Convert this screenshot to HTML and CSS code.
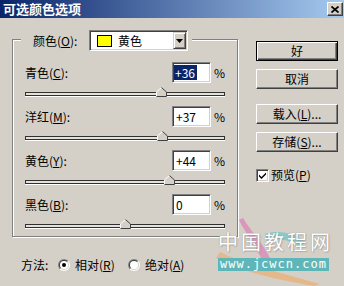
FILE: index.html
```html
<!DOCTYPE html>
<html lang="zh-CN">
<head>
<meta charset="utf-8">
<title>可选颜色选项</title>
<link rel="stylesheet" href="styles.css">
</head>
<body>
<div class="window">
  <div class="titlebar">
    <span class="title">可选颜色选项</span>
    <span class="close-btn"><svg width="8" height="7" viewBox="0 0 8 7"><path d="M0.5 0.5 L7.5 6.5 M7.5 0.5 L0.5 6.5" stroke="#000" stroke-width="1.7"/></svg></span>
  </div>
  <div class="body">
    <div class="left">
      <div class="group">
        <div class="legend">
          <span class="legend-label">颜色(<u>O</u>):</span>
          <div class="combo">
            <span class="swatch"></span>
            <span class="combo-text">黄色</span>
            <span class="combo-arrow"><svg width="7" height="4" viewBox="0 0 7 4"><path d="M0 0H7L3.5 4Z" fill="#000"/></svg></span>
          </div>
        </div>
        <div class="srow">
          <div class="sline">
            <span class="slabel">青色(<u>C</u>):</span>
            <span class="field"><span class="sel">+36</span></span>
            <span class="pct">%</span>
          </div>
          <div class="track"><svg class="thumb" style="left:130px" width="11" height="10" viewBox="0 0 11 10"><path d="M5.5 0.5 L10.5 5 V9.5 H0.5 V5 Z" fill="#D4D0C8"/><path d="M0.5 9 V5 L5.5 0.5" fill="none" stroke="#fff"/><path d="M5.5 0.5 L10.5 5 V9.5 H0.5" fill="none" stroke="#404040"/></svg></div>
        </div>
        <div class="srow">
          <div class="sline">
            <span class="slabel">洋红(<u>M</u>):</span>
            <span class="field">+37</span>
            <span class="pct">%</span>
          </div>
          <div class="track"><svg class="thumb" style="left:131px" width="11" height="10" viewBox="0 0 11 10"><path d="M5.5 0.5 L10.5 5 V9.5 H0.5 V5 Z" fill="#D4D0C8"/><path d="M0.5 9 V5 L5.5 0.5" fill="none" stroke="#fff"/><path d="M5.5 0.5 L10.5 5 V9.5 H0.5" fill="none" stroke="#404040"/></svg></div>
        </div>
        <div class="srow">
          <div class="sline">
            <span class="slabel">黄色(<u>Y</u>):</span>
            <span class="field">+44</span>
            <span class="pct">%</span>
          </div>
          <div class="track"><svg class="thumb" style="left:138px" width="11" height="10" viewBox="0 0 11 10"><path d="M5.5 0.5 L10.5 5 V9.5 H0.5 V5 Z" fill="#D4D0C8"/><path d="M0.5 9 V5 L5.5 0.5" fill="none" stroke="#fff"/><path d="M5.5 0.5 L10.5 5 V9.5 H0.5" fill="none" stroke="#404040"/></svg></div>
        </div>
        <div class="srow">
          <div class="sline">
            <span class="slabel">黑色(<u>B</u>):</span>
            <span class="field">0</span>
            <span class="pct">%</span>
          </div>
          <div class="track"><svg class="thumb" style="left:94px" width="11" height="10" viewBox="0 0 11 10"><path d="M5.5 0.5 L10.5 5 V9.5 H0.5 V5 Z" fill="#D4D0C8"/><path d="M0.5 9 V5 L5.5 0.5" fill="none" stroke="#fff"/><path d="M5.5 0.5 L10.5 5 V9.5 H0.5" fill="none" stroke="#404040"/></svg></div>
        </div>
      </div>
      <div class="method">
        <span class="mlabel">方法:</span>
        <svg class="radio" width="12" height="12" viewBox="0 0 12 12">
          <defs>
            <linearGradient id="ro" x1="0" y1="0" x2="1" y2="1"><stop offset="0.5" stop-color="#808080"/><stop offset="0.5" stop-color="#ffffff"/></linearGradient>
            <linearGradient id="ri" x1="0" y1="0" x2="1" y2="1"><stop offset="0.5" stop-color="#404040"/><stop offset="0.5" stop-color="#D4D0C8"/></linearGradient>
          </defs>
          <circle cx="6" cy="6" r="6" fill="url(#ro)"/>
          <circle cx="6" cy="6" r="5" fill="url(#ri)"/>
          <circle cx="6" cy="6" r="4" fill="#fff"/>
          <circle cx="6" cy="6" r="2" fill="#000"/>
        </svg>
        <span class="rlabel">相对(<u>R</u>)</span>
        <svg class="radio" width="12" height="12" viewBox="0 0 12 12">
          <circle cx="6" cy="6" r="6" fill="url(#ro)"/>
          <circle cx="6" cy="6" r="5" fill="url(#ri)"/>
          <circle cx="6" cy="6" r="4" fill="#fff"/>
        </svg>
        <span class="rlabel">绝对(<u>A</u>)</span>
      </div>
    </div>
    <div class="right">
      <div class="btn default">好</div>
      <div class="btn b-cancel">取消</div>
      <div class="btn b-load">载入(<u>L</u>)...</div>
      <div class="btn b-save">存储(<u>S</u>)...</div>
      <div class="check-row">
        <span class="checkbox"><svg width="7" height="7" viewBox="0 0 7 7"><path d="M0 2.5 L2.5 5 L7 0.5 V2.5 L2.5 7 L0 4.5Z" fill="#000"/></svg></span>
        <span class="clabel">预览(<u>P</u>)</span>
      </div>
    </div>
  </div>
  <div class="watermark">
    <svg class="swoosh" width="134" height="74" viewBox="0 0 134 74">
      <path d="M10 40 C30 50 60 58 110 72 L104 74 C58 66 28 58 6 46 Z" fill="#F0A860" opacity="0.6"/>
      <path d="M33 6 C40 18 52 30 60 46 L53 50 C46 34 36 22 29 8 Z" fill="#D98AB5" opacity="0.8"/>
      <path d="M55 22 C70 17 86 22 96 30 L90 35 C80 27 68 26 57 29 Z" fill="#7EC8C8" opacity="0.85"/>
    </svg>
    <span class="wm-cn">中国教程网</span>
    <span class="wm-url">www.jcwcn.com</span>
  </div>
</div>
</body>
</html>
```
FILE: styles.css
```css
html, body {
  margin: 0;
  padding: 0;
}
body {
  width: 344px;
  height: 286px;
  overflow: hidden;
  background: #D4D0C8;
  font-family: "Noto Sans CJK SC", sans-serif;
  font-size: 12px;
  line-height: 14px;
  color: #000;
}
u { text-decoration: underline; text-underline-offset: 1px; }
.window {
  position: relative;
  width: 344px;
  height: 286px;
}
.titlebar {
  height: 18px;
  box-sizing: border-box;
  display: flex;
  align-items: center;
  justify-content: space-between;
  padding: 0 1px 0 3px;
  background: linear-gradient(to right, #0A246A, #A6CAF0);
}
.title {
  color: #fff;
  font-weight: bold;
  font-size: 13px;
  line-height: 18px;
}
.close-btn {
  width: 16px;
  height: 14px;
  box-sizing: border-box;
  background: #D4D0C8;
  border: 1px solid;
  border-color: #fff #404040 #404040 #fff;
  box-shadow: inset -1px -1px #808080;
  display: flex;
  align-items: center;
  justify-content: center;
}
.body {
  display: flex;
  padding-left: 12px;
}
.left {
  width: 226px;
  display: flex;
  flex-direction: column;
}
.group {
  margin-top: 21px;
  height: 198px;
  box-sizing: border-box;
  border: 1px solid #808080;
  box-shadow: inset 1px 1px #fff, 1px 1px #fff;
  padding: 0 12px;
}
.legend {
  display: flex;
  align-items: center;
  width: fit-content;
  margin: -10px 0 11px -4px;
  padding: 0 4px 0 12px;
  background: #D4D0C8;
}
.legend-label {
  width: 56px;
}
.combo {
  width: 99px;
  height: 21px;
  box-sizing: border-box;
  border: 1px solid;
  border-color: #808080 #fff #fff #808080;
  box-shadow: inset 1px 1px #404040, inset -1px -1px #D4D0C8;
  background: #fff;
  display: flex;
  align-items: center;
  padding-left: 7px;
}
.swatch {
  width: 15px;
  height: 12px;
  box-sizing: border-box;
  border: 1px solid #000;
  background: #FFFF00;
}
.combo-text {
  margin-left: 6px;
}
.combo-arrow {
  margin-left: auto;
  margin-right: 1px;
  width: 13px;
  height: 17px;
  box-sizing: border-box;
  background: #D4D0C8;
  border: 1px solid;
  border-color: #D4D0C8 #404040 #404040 #D4D0C8;
  box-shadow: inset 1px 1px #fff, inset -1px -1px #808080;
  display: flex;
  align-items: center;
  justify-content: center;
}
.srow {
  height: 44px;
  display: flex;
  flex-direction: column;
}
.srow:last-child {
  height: auto;
}
.sline {
  height: 21px;
  display: flex;
  align-items: center;
}
.slabel {
  flex: 1;
}
.field {
  width: 39px;
  height: 21px;
  box-sizing: border-box;
  border: 1px solid;
  border-color: #808080 #fff #fff #808080;
  box-shadow: inset 1px 1px #404040, inset -1px -1px #D4D0C8;
  background: #fff;
  padding-left: 3px;
  display: flex;
  align-items: center;
}
.sel {
  margin-left: -2px;
  padding: 0 2px 0 1px;
  background: #0A246A;
  color: #fff;
  line-height: 15px;
}
.pct {
  margin-left: 3px;
  width: 11px;
}
.track {
  position: relative;
  margin-top: 9px;
  height: 4px;
  box-sizing: border-box;
  border: 1px solid #303030;
  background: #E4E1DB;
  box-shadow: 0 1px #fff;
}
.thumb {
  position: absolute;
  top: -6px;
}
.method {
  display: flex;
  align-items: center;
  height: 14px;
  margin-top: 21px;
  padding-left: 9px;
}
.mlabel {
  width: 37px;
}
.radio {
  margin-right: 5px;
  flex: none;
}
.rlabel {
  width: 53px;
}
.right {
  width: 82px;
  margin-left: 18px;
  padding-top: 23px;
  display: flex;
  flex-direction: column;
}
.btn {
  height: 20px;
  box-sizing: border-box;
  border: 1px solid;
  border-color: #fff #404040 #404040 #fff;
  box-shadow: inset -1px -1px #808080;
  display: flex;
  align-items: center;
  justify-content: center;
}
.btn.default {
  border: 1px solid #000;
  box-shadow: inset 1px 1px #fff, inset -1px -1px #404040, inset -2px -2px #808080;
}
.b-cancel { margin-top: 8px; }
.b-load { margin-top: 15px; }
.b-save { margin-top: 8px; }
.check-row {
  margin-top: 16px;
  display: flex;
  align-items: center;
}
.checkbox {
  width: 13px;
  height: 13px;
  box-sizing: border-box;
  border: 1px solid;
  border-color: #808080 #fff #fff #808080;
  box-shadow: inset 1px 1px #404040, inset -1px -1px #D4D0C8;
  background: #fff;
  display: flex;
  align-items: center;
  justify-content: center;
}
.clabel {
  margin-left: 2px;
}
.watermark {
  position: absolute;
  left: 210px;
  top: 212px;
  width: 134px;
  height: 74px;
  pointer-events: none;
}
.swoosh {
  position: absolute;
  left: 0;
  top: 0;
}
.wm-cn {
  position: absolute;
  left: 8px;
  top: 18px;
  font-size: 20px;
  line-height: 24px;
  font-weight: 400;
  letter-spacing: 3px;
  color: #fff;
  text-shadow: 0 0 1px rgba(120, 120, 120, 0.8), 1px 1px 1px rgba(150, 150, 150, 0.5);
  white-space: nowrap;
}
.wm-url {
  position: absolute;
  left: 8px;
  top: 46px;
  height: 13px;
  padding: 0 2px;
  background: #5FB6B8;
  color: #fff;
  font-family: "DejaVu Sans Mono", monospace;
  font-size: 12px;
  line-height: 13px;
  letter-spacing: 1px;
  white-space: nowrap;
}
```
